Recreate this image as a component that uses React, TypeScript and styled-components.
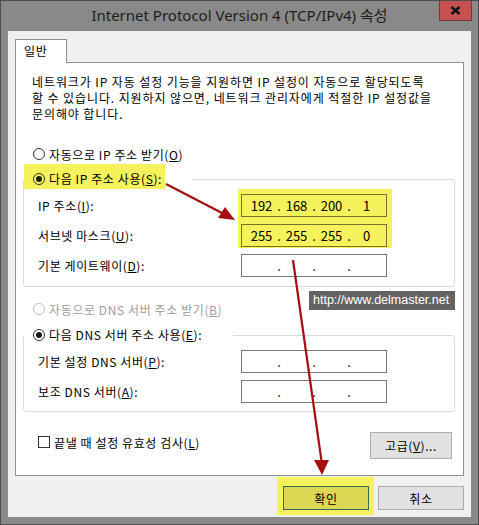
import React from "react";
import styled, { createGlobalStyle } from "styled-components";

const UI_FONT = `"Noto Sans CJK KR", "Noto Sans", sans-serif`;
const YELLOW = "#f6f25c";
const ARROW = "#a50f0f";

const GlobalStyle = createGlobalStyle`
  html, body {
    margin: 0;
    padding: 0;
    background: #fff;
  }
  * {
    box-sizing: border-box;
  }
`;

const Window = styled.div`
  position: relative;
  width: 479px;
  height: 525px;
  border: 1px solid #4e4e4e;
  background: #898989;
  display: flex;
  flex-direction: column;
  font-family: ${UI_FONT};
  font-size: 12px;
  letter-spacing: 0.6px;
  color: #000;
`;

const TitleBar = styled.div`
  height: 30px;
  flex: none;
  display: grid;
  grid-template-columns: 1fr auto 1fr;
  align-items: start;
`;

const Title = styled.div`
  grid-column: 2;
  line-height: 29px;
  font-family: "Noto Sans", "Noto Sans CJK KR", sans-serif;
  font-size: 15px;
  letter-spacing: 0;
  color: #1c1c1c;
  white-space: nowrap;
`;

const CloseButton = styled.div`
  grid-column: 3;
  justify-self: end;
  width: 33px;
  height: 20px;
  margin-right: 6px;
  background: #c75050;
  border: 1px solid #6e3b3b;
  border-top: none;
  display: flex;
  align-items: center;
  justify-content: center;
`;

const Body = styled.div`
  flex: 1;
  margin: 0 7px 7px;
  background: #f0f0f0;
  padding: 8px 7px 7px;
  display: flex;
  flex-direction: column;
`;

const Tabs = styled.div`
  display: flex;
`;

const Tab = styled.div`
  position: relative;
  z-index: 1;
  width: 52px;
  height: 24px;
  margin-bottom: -1px;
  padding-left: 8px;
  line-height: 22px;
  background: #fff;
  border: 1px solid #8e8f8f;
  border-bottom: none;
`;

const Panel = styled.div`
  background: #fff;
  border: 1px solid #8e8f8f;
  padding: 11px 8px 16px 7px;
  display: flex;
  flex-direction: column;
`;

const Intro = styled.p`
  margin: 0 0 0 9px;
  line-height: 16px;
  letter-spacing: 0.9px;
  white-space: nowrap;
`;

const OptionRow = styled.div<{ $top: number; $disabled?: boolean }>`
  display: flex;
  align-items: center;
  gap: 4px;
  height: 16px;
  margin: ${(p) => p.$top}px 0 0 10px;
  color: ${(p) => (p.$disabled ? "#9d9d9d" : "#000")};
  white-space: nowrap;
`;

const Radio = styled.span<{ $checked?: boolean; $disabled?: boolean }>`
  width: 12px;
  height: 12px;
  flex: none;
  border-radius: 50%;
  border: 1px solid ${(p) => (p.$disabled ? "#bdbdbd" : "#333")};
  display: flex;
  align-items: center;
  justify-content: center;

  &::after {
    content: "";
    width: 6px;
    height: 6px;
    border-radius: 50%;
    background: ${(p) => (p.$checked ? "#1a1a1a" : "transparent")};
  }
`;

const GroupBox = styled.div<{ $top: number; $bottom: number }>`
  margin-top: ${(p) => p.$top}px;
  padding-bottom: ${(p) => p.$bottom}px;
  border: 1px solid #d5dde2;
  border-radius: 3px;
`;

const GroupHeader = styled.div`
  display: flex;
  width: fit-content;
  margin-top: -16px;
  padding-right: 28px;
  background: #fff;
`;

const Mark = styled.div<{ $on?: boolean }>`
  display: flex;
  align-items: center;
  gap: 4px;
  height: 25px;
  padding: 7px 3px 2px 9px;
  line-height: 16px;
  white-space: nowrap;
  background: ${(p) => (p.$on ? YELLOW : "transparent")};
`;

const FieldGrid = styled.div`
  display: grid;
  grid-template-columns: 1fr 146px;
  grid-auto-rows: 23px;
  row-gap: 7px;
  margin-top: 5px;
  padding: 0 67px 0 14px;
`;

const FieldLabel = styled.div<{ $row: number }>`
  grid-column: 1;
  grid-row: ${(p) => p.$row};
  align-self: center;
  white-space: nowrap;
`;

const FieldMark = styled.div`
  grid-column: 2;
  grid-row: 1 / span 2;
  display: flex;
  flex-direction: column;
  gap: 7px;
  margin: -5px -5px -1px -3px;
  padding: 5px 5px 1px 3px;
  background: ${YELLOW};
`;

const IpBox = styled.div<{ $marked?: boolean; $row?: number }>`
  grid-column: 2;
  grid-row: ${(p) => p.$row ?? "auto"};
  height: 23px;
  display: flex;
  align-items: center;
  padding-left: 6px;
  font-size: 13px;
  letter-spacing: 0;
  border: 1px solid ${(p) => (p.$marked ? "#76722c" : "#7a7a7a")};
  background: ${(p) => (p.$marked ? "transparent" : "#fff")};
`;

const Octet = styled.span`
  width: 27px;
  text-align: center;
`;

const Dot = styled.span`
  width: 8px;
  text-align: center;
`;

const BottomRow = styled.div`
  display: flex;
  align-items: flex-start;
  justify-content: space-between;
  margin-top: 20px;
  padding: 0 3px 0 15px;
`;

const CheckLabel = styled.div`
  display: flex;
  align-items: center;
  gap: 4px;
  height: 16px;
  margin-top: 2px;
  white-space: nowrap;
`;

const CheckBox = styled.span`
  width: 12px;
  height: 12px;
  border: 1px solid #333;
  background: #fff;
`;

const Button = styled.button<{ $w: number; $h: number; $default?: boolean }>`
  width: ${(p) => p.$w}px;
  height: ${(p) => p.$h}px;
  padding: 0;
  font: inherit;
  letter-spacing: inherit;
  color: #000;
  background: ${(p) => (p.$default ? "#dcd853" : "#e1e1e1")};
  border: 1px solid ${(p) => (p.$default ? "#2f6b58" : "#adadad")};
  display: flex;
  align-items: center;
  justify-content: center;
`;

const Footer = styled.div`
  display: flex;
  justify-content: flex-end;
  gap: 9px;
  margin-top: 10px;
`;

const ButtonMark = styled.div`
  display: flex;
  margin: -9px -5px -5px -6px;
  padding: 9px 5px 5px 6px;
  background: ${YELLOW};
`;

const Watermark = styled.div`
  position: absolute;
  left: 308px;
  top: 290px;
  width: 146px;
  height: 19px;
  padding-left: 4px;
  background: #636363;
  color: #fff;
  font-family: "Liberation Sans", Arial, sans-serif;
  font-size: 12.5px;
  letter-spacing: 0;
  line-height: 19px;
`;

const Overlay = styled.svg`
  position: absolute;
  left: -1px;
  top: -1px;
  pointer-events: none;
`;

const IpField: React.FC<{ octets?: string[]; marked?: boolean; row?: number }> = ({
  octets = ["", "", "", ""],
  marked,
  row,
}) => (
  <IpBox $marked={marked} $row={row}>
    {octets.map((o, i) => (
      <React.Fragment key={i}>
        <Octet>{o}</Octet>
        {i < 3 && <Dot>.</Dot>}
      </React.Fragment>
    ))}
  </IpBox>
);

export default function App() {
  return (
    <>
      <GlobalStyle />
      <Window>
        <TitleBar>
          <Title>Internet Protocol Version 4 (TCP/IPv4) 속성</Title>
          <CloseButton>
            <svg width="11" height="9" viewBox="0 0 11 9">
              <path d="M1.5 1 L9.5 8 M9.5 1 L1.5 8" stroke="#111" strokeWidth="2.4" />
            </svg>
          </CloseButton>
        </TitleBar>

        <Body>
          <Tabs>
            <Tab>일반</Tab>
          </Tabs>
          <Panel>
            <Intro>
              네트워크가 IP 자동 설정 기능을 지원하면 IP 설정이 자동으로 할당되도록
              <br />
              할 수 있습니다. 지원하지 않으면, 네트워크 관리자에게 적절한 IP 설정값을
              <br />
              문의해야 합니다.
            </Intro>

            <OptionRow $top={24}>
              <Radio />
              <span>
                자동으로 IP 주소 받기(<u>O</u>)
              </span>
            </OptionRow>

            <GroupBox $top={17} $bottom={9}>
              <GroupHeader>
                <Mark $on>
                  <Radio $checked />
                  <span>
                    다음 IP 주소 사용(<u>S</u>):
                  </span>
                </Mark>
              </GroupHeader>
              <FieldGrid>
                <FieldLabel $row={1}>
                  IP 주소(<u>I</u>):
                </FieldLabel>
                <FieldLabel $row={2}>
                  서브넷 마스크(<u>U</u>):
                </FieldLabel>
                <FieldLabel $row={3}>
                  기본 게이트웨이(<u>D</u>):
                </FieldLabel>
                <FieldMark>
                  <IpField marked octets={["192", "168", "200", "1"]} />
                  <IpField marked octets={["255", "255", "255", "0"]} />
                </FieldMark>
                <IpField row={3} />
              </FieldGrid>
            </GroupBox>

            <OptionRow $top={14} $disabled>
              <Radio $disabled />
              <span>
                자동으로 DNS 서버 주소 받기(<u>B</u>)
              </span>
            </OptionRow>

            <GroupBox $top={18} $bottom={8}>
              <GroupHeader>
                <Mark>
                  <Radio $checked />
                  <span>
                    다음 DNS 서버 주소 사용(<u>E</u>):
                  </span>
                </Mark>
              </GroupHeader>
              <FieldGrid>
                <FieldLabel $row={1}>
                  기본 설정 DNS 서버(<u>P</u>):
                </FieldLabel>
                <FieldLabel $row={2}>
                  보조 DNS 서버(<u>A</u>):
                </FieldLabel>
                <IpField row={1} />
                <IpField row={2} />
              </FieldGrid>
            </GroupBox>

            <BottomRow>
              <CheckLabel>
                <CheckBox />
                <span>
                  끝낼 때 설정 유효성 검사(<u>L</u>)
                </span>
              </CheckLabel>
              <Button $w={82} $h={27}>
                고급(<u>V</u>)...
              </Button>
            </BottomRow>
          </Panel>

          <Footer>
            <ButtonMark>
              <Button $w={86} $h={24} $default>
                확인
              </Button>
            </ButtonMark>
            <Button $w={86} $h={24}>
              취소
            </Button>
          </Footer>
        </Body>

        <Watermark>http://www.delmaster.net</Watermark>

        <Overlay width="479" height="525" viewBox="0 0 479 525">
          <line x1="166" y1="184" x2="222" y2="213" stroke={ARROW} strokeWidth="2.2" />
          <polygon points="235,220 225,207 218,218" fill={ARROW} />
          <line x1="293" y1="260" x2="321.5" y2="461" stroke={ARROW} strokeWidth="2.2" />
          <polygon points="322,475 314,460 329,460" fill={ARROW} />
        </Overlay>
      </Window>
    </>
  );
}
